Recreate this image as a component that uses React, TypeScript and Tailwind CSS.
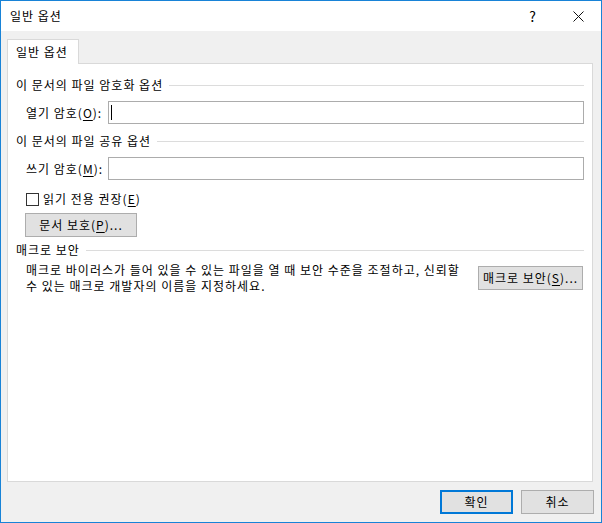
import React from "react"

const font = { fontFamily: '"Noto Sans CJK KR", "Noto Sans", sans-serif' }

function U({ children }: { children: React.ReactNode }) {
  return <span className="underline underline-offset-2">{children}</span>
}

function GroupHeading({ children }: { children: React.ReactNode }) {
  return (
    <div className="flex h-4 items-center gap-[6px]">
      <span className="leading-4 whitespace-nowrap">{children}</span>
      <div className="h-px flex-1 bg-[#dcdcdc]" />
    </div>
  )
}

function WinButton({
  children,
  isDefault,
  className = "",
}: {
  children: React.ReactNode
  isDefault?: boolean
  className?: string
}) {
  return (
    <button
      className={
        "flex h-[24px] items-center justify-center bg-[#e1e1e1] leading-4 tracking-[1px] text-black " +
        (isDefault ? "border-2 border-[#0078d7] " : "border border-[#adadad] ") +
        className
      }
    >
      {children}
    </button>
  )
}

export default function App() {
  return (
    <div
      className="flex h-[523px] w-[602px] flex-col border border-[#1883d7] bg-[#f0f0f0] text-[12px] tracking-[1px] text-black"
      style={font}
    >
      {/* title bar */}
      <div className="flex h-[30px] items-center bg-white">
        <div className="flex-1 pl-[9px] leading-4">일반 옵션</div>
        <div className="flex h-full w-[46px] items-center justify-center pl-[2px] text-[14px]">?</div>
        <div className="flex h-full w-[46px] items-center justify-center">
          <svg width="11" height="11" viewBox="0 0 11 11">
            <path d="M0.5 0.5 L10.5 10.5 M10.5 0.5 L0.5 10.5" stroke="#111" strokeWidth="1" />
          </svg>
        </div>
      </div>

      {/* body */}
      <div className="flex flex-1 flex-col pt-[8px] pr-[8px] pb-[8px] pl-[6px]">
        <div className="flex">
          <div className="relative z-10 -mb-px flex h-[25px] w-[72px] items-start border border-b-0 border-[#d9d9d9] bg-white pl-[8px] pt-[4px] leading-4">
            일반 옵션
          </div>
        </div>

        <div className="flex flex-1 flex-col border border-[#d9d9d9] bg-white px-[8px]">
          <div className="mt-[13px]">
            <GroupHeading>이 문서의 파일 암호화 옵션</GroupHeading>
          </div>
          <div className="mt-[8px] flex items-center pl-[10px]">
            <span className="w-[82px] leading-4">
              열기 암호(<U>O</U>):
            </span>
            <div className="flex h-[23px] flex-1 items-center border border-[#acacac] bg-white pl-[2px]">
              <span className="h-[15px] w-px bg-black" />
            </div>
          </div>

          <div className="mt-[9px]">
            <GroupHeading>이 문서의 파일 공유 옵션</GroupHeading>
          </div>
          <div className="mt-[8px] flex items-center pl-[10px]">
            <span className="w-[82px] leading-4">
              쓰기 암호(<U>M</U>):
            </span>
            <div className="h-[23px] flex-1 border border-[#acacac] bg-white" />
          </div>

          <div className="mt-[11px] flex h-4 items-center pl-[10px]">
            <span className="h-[13px] w-[13px] border border-[#333333] bg-white" />
            <span className="ml-[4px] leading-4">
              읽기 전용 권장(<U>E</U>)
            </span>
          </div>

          <div className="mt-[6px] pl-[9px]">
            <WinButton className="w-[112px]">
              문서 보호(<U>P</U>)...
            </WinButton>
          </div>

          <div className="mt-[5px]">
            <GroupHeading>매크로 보안</GroupHeading>
          </div>
          <div className="mt-[4px] flex items-start pl-[10px]">
            <p className="flex-1 leading-4 whitespace-nowrap">
              매크로 바이러스가 들어 있을 수 있는 파일을 열 때 보안 수준을 조절하고, 신뢰할
              <br />수 있는 매크로 개발자의 이름을 지정하세요.
            </p>
            <WinButton className="mt-[4px] mr-px w-[105px]">
              매크로 보안(<U>S</U>)...
            </WinButton>
          </div>
        </div>

        <div className="mt-[8px] -mr-px flex justify-end gap-[8px]">
          <WinButton isDefault className="w-[73px]">
            확인
          </WinButton>
          <WinButton className="w-[73px]">취소</WinButton>
        </div>
      </div>
    </div>
  )
}
